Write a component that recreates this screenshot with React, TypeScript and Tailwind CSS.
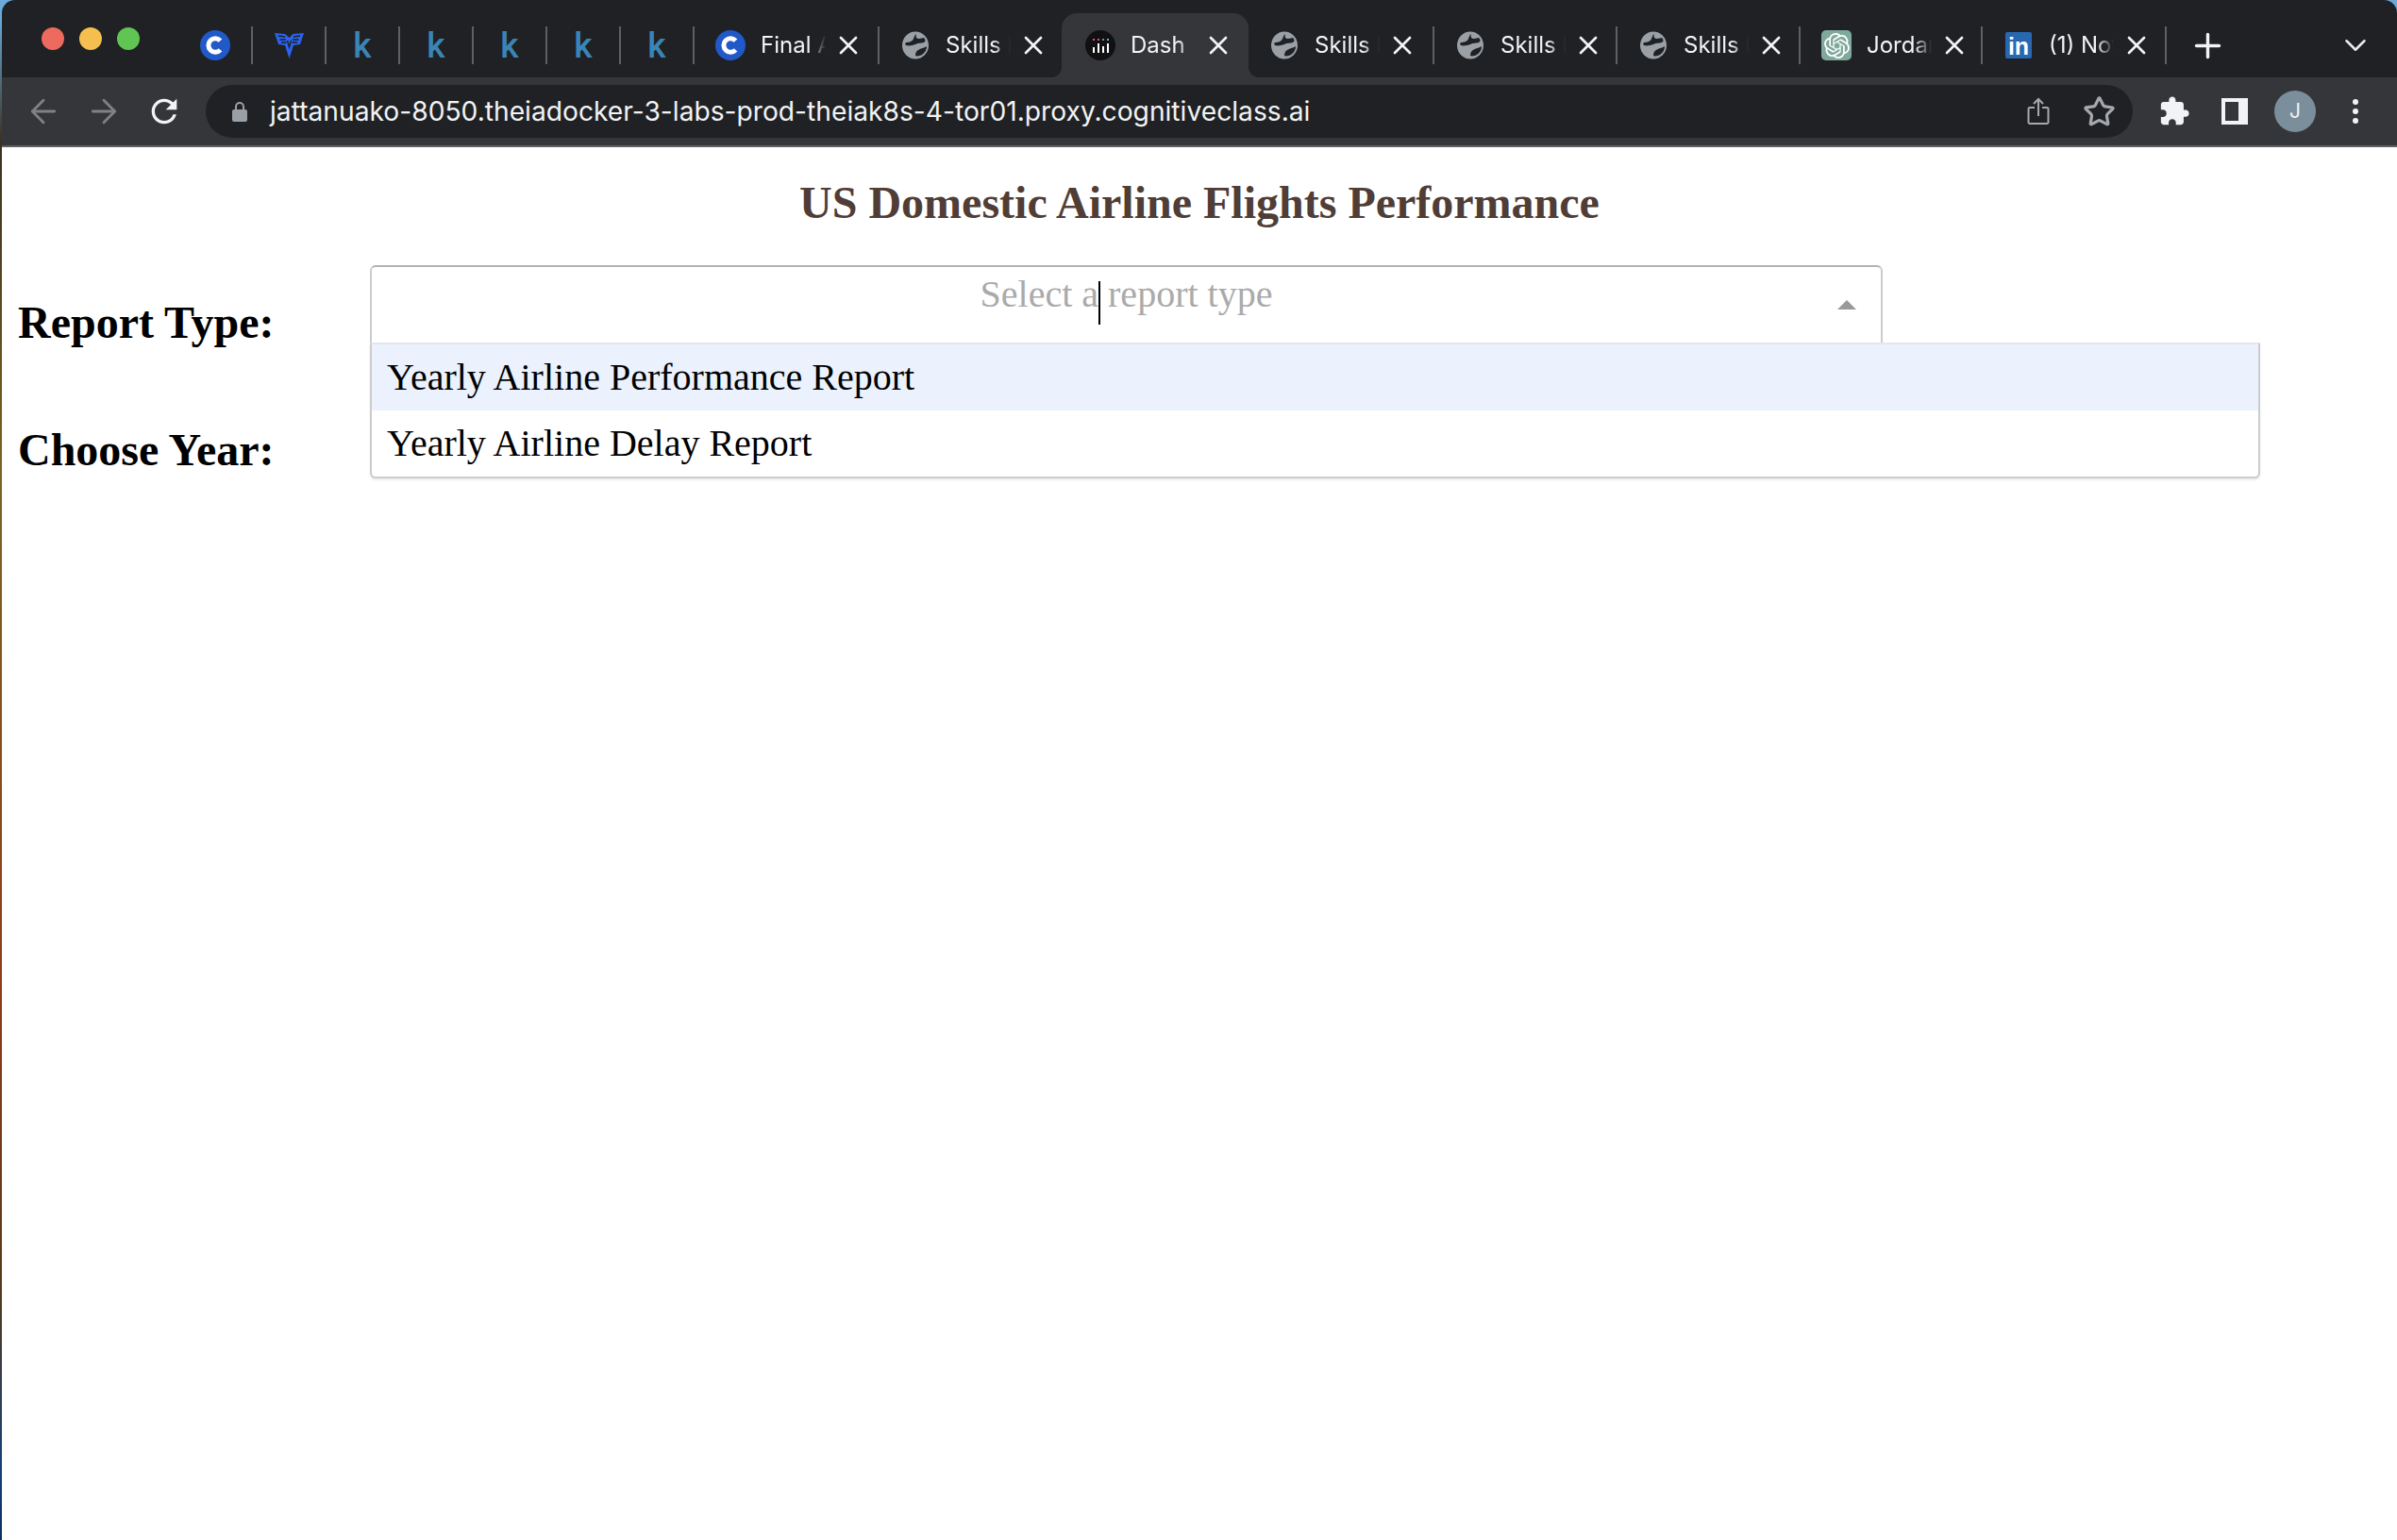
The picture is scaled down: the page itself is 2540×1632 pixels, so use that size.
import { ArrowLeft, ArrowRight, ChevronDown, Plus, Star, X } from "lucide-react";
import { SiOpenai } from "react-icons/si";

const CourseraIcon = () => (
  <svg width="32" height="32" viewBox="0 0 32 32">
    <circle cx="16" cy="16" r="16" fill="#2159c9" />
    <path d="M21.5 11.2a7.2 7.2 0 1 0 0 9.6" fill="none" stroke="#fff" strokeWidth="5" />
  </svg>
);

const ShieldIcon = () => (
  <svg width="31" height="28" viewBox="0 0 31 28">
    <path d="M0 1l11 1 4.500 4 4-4 11.500-1-4 12-7 1-4.500 14-4.500-14-7-1z" fill="#2a63ee" />
    <path
      d="M4 4l7 1M5.500 8l6.500 0M7 11l5.500 0M27 4l-7 1M25.500 8l-6.500 0M24 11l-5.500 0M13.500 9l2 7 2-7"
      fill="none"
      stroke="#202124"
      strokeWidth="1.400"
    />
  </svg>
);

const GlobeIcon = () => (
  <svg width="28" height="30" viewBox="0 0 28 30">
    <ellipse cx="14" cy="15" rx="14" ry="14.500" fill="#9aa0a6" />
    <path
      d="M15 3c-1 3 0 5 3 5 2 0 4-1 5-1 2 2 2 4 0 5-3 1-6 0-9 2-3 1-7 2-10 1-1-1-1-2 0-3 3 0 7-1 8-4 1-2 1-4 3-5z M26 16c0 4-2 7-5 9-2 1-5 2-7 1 0-3 1-5 3-6 3-2 6-2 9-4z"
      fill="#202124"
    />
  </svg>
);

const DashIcon = () => (
  <svg width="32" height="32" viewBox="0 0 32 32">
    <circle cx="16" cy="16" r="16" fill="#111114" />
    <rect x="8" y="9" width="2" height="2" fill="#e0527d" />
    <rect x="13" y="9" width="2" height="2" fill="#e0527d" />
    <rect x="18" y="9" width="2" height="2" fill="#8a7fc0" />
    <rect x="23" y="9" width="2" height="2" fill="#5bbad5" />
    <rect x="8" y="18" width="2" height="6" fill="#fff" />
    <rect x="13" y="14" width="2" height="10" fill="#fff" />
    <rect x="18" y="17" width="2" height="7" fill="#fff" />
    <rect x="23" y="14" width="2" height="10" fill="#fff" />
  </svg>
);

const OpenAiIcon = () => (
  <div className="flex h-[32px] w-[32px] items-center justify-center rounded-[5px] bg-[#7fa99b] text-white">
    <SiOpenai size={27} />
  </div>
);

const LinkedInIcon = () => (
  <div className="flex h-[28px] w-[28px] items-end justify-center rounded-[2px] bg-[#2867b2] font-['Liberation_Sans',sans-serif] text-[25px] leading-[26px] font-bold text-white">
    in
  </div>
);

const Sep = () => <div className="h-[40px] w-[2px] shrink-0 bg-[#5f6064]" />;

const PinnedTab = ({ children }: { children: React.ReactNode }) => (
  <>
    <div className="flex h-[68px] w-[76px] items-center justify-center">{children}</div>
    <Sep />
  </>
);

const KTab = () => (
  <PinnedTab>
    <span className="font-['Roboto',sans-serif] text-[37px] leading-none font-medium text-[#3a85b8]">k</span>
  </PinnedTab>
);

const Tab = ({
  icon,
  title,
  widthClass,
  active = false,
}: {
  icon: React.ReactNode;
  title: string;
  widthClass: string;
  active?: boolean;
}) => (
  <div
    className={`relative flex h-[68px] items-center ${widthClass} ${
      active ? "rounded-t-[16px] bg-[#35363a] pl-[25px]" : "pl-[22px]"
    }`}
  >
    {active && (
      <>
        <div className="absolute bottom-0 left-[-12px] h-[12px] w-[12px] bg-[radial-gradient(circle_at_0_0,transparent_12px,#35363a_12.5px)]" />
        <div className="absolute right-[-12px] bottom-0 h-[12px] w-[12px] bg-[radial-gradient(circle_at_100%_0,transparent_12px,#35363a_12.5px)]" />
      </>
    )}
    <div className="flex w-[32px] shrink-0 items-center justify-center">{icon}</div>
    <span className="ml-[16px] w-[72px] shrink-0 overflow-hidden text-[24px] whitespace-nowrap text-[#f1f3f4] [mask-image:linear-gradient(to_right,black_70%,transparent_96%)]">
      {title}
    </span>
    <div className="ml-[1px] flex w-[40px] shrink-0 items-center justify-center text-[#f1f3f4]">
      <X size={32} strokeWidth={2} />
    </div>
  </div>
);

const IconBox = ({ children }: { children: React.ReactNode }) => (
  <div className="flex h-[64px] w-[64px] shrink-0 items-center justify-center">{children}</div>
);

const App = () => {
  return (
    <div className="flex min-h-[1632px] w-[2540px] bg-[linear-gradient(to_bottom,#6aa9d8_0,#6aa9d8_20px,#3a3020_150px,#7a6420_500px,#8f3a1c_1050px,#5a3a15_1350px,#123f78_1560px,#0c2f5c_1632px)] pl-[2px] font-['Inter',sans-serif]">
      <div className="flex min-h-[1632px] w-full flex-col overflow-hidden rounded-t-[14px]">
        {/* tab strip */}
        <div className="flex h-[82px] bg-[#202124]">
          <div className="flex gap-[16px] pt-[29px] pl-[42px]">
            <div className="h-[24px] w-[24px] rounded-full bg-[#ed6a5e]" />
            <div className="h-[24px] w-[24px] rounded-full bg-[#f4bf4f]" />
            <div className="h-[24px] w-[24px] rounded-full bg-[#61c554]" />
          </div>
          <div className="mt-[14px] ml-[42px] flex h-[68px] items-center">
            <PinnedTab>
              <CourseraIcon />
            </PinnedTab>
            <PinnedTab>
              <ShieldIcon />
            </PinnedTab>
            <KTab />
            <KTab />
            <KTab />
            <KTab />
            <KTab />
            <Tab icon={<CourseraIcon />} title="Final Assignment" widthClass="w-[194px]" />
            <Sep />
            <Tab icon={<GlobeIcon />} title="Skills Network" widthClass="w-[193px]" />
            <Tab icon={<DashIcon />} title="Dash" widthClass="w-[198px]" active />
            <Tab icon={<GlobeIcon />} title="Skills Network" widthClass="w-[195px]" />
            <Sep />
            <Tab icon={<GlobeIcon />} title="Skills Network" widthClass="w-[192px]" />
            <Sep />
            <Tab icon={<GlobeIcon />} title="Skills Network" widthClass="w-[192px]" />
            <Sep />
            <Tab icon={<OpenAiIcon />} title="Jordan Tatta" widthClass="w-[191px]" />
            <Sep />
            <Tab icon={<LinkedInIcon />} title="(1) Notifications" widthClass="w-[193px]" />
            <Sep />
            <div className="ml-[11px] flex w-[64px] justify-center text-[#f1f3f4]">
              <Plus size={41} strokeWidth={2} />
            </div>
          </div>
          <div className="mt-[14px] mr-[12px] ml-auto flex h-[68px] w-[64px] items-center justify-center text-[#e8eaed]">
            <ChevronDown size={38} strokeWidth={1.6} />
          </div>
        </div>

        {/* toolbar */}
        <div className="flex h-[74px] items-start border-b-2 border-[#5f6062] bg-[#35363a] pl-[12px]">
          <div className="mt-[4px] flex">
            <IconBox>
              <ArrowLeft size={40} strokeWidth={1.7} className="text-[#7f8185]" />
            </IconBox>
            <IconBox>
              <ArrowRight size={40} strokeWidth={1.7} className="text-[#7f8185]" />
            </IconBox>
            <IconBox>
              <svg width="40" height="40" viewBox="0 0 24 24" fill="#f1f3f4">
                <path d="M17.65 6.35A7.958 7.958 0 0 0 12 4c-4.42 0-7.99 3.58-7.99 8s3.57 8 7.99 8c3.73 0 6.84-2.55 7.73-6h-2.08A5.99 5.99 0 0 1 12 18c-3.31 0-6-2.69-6-6s2.69-6 6-6c1.66 0 3.14.69 4.22 1.78L13 11h7V4l-2.35 2.35z" />
              </svg>
            </IconBox>
          </div>
          <div className="mt-[8px] ml-[12px] flex h-[56px] w-[2042px] items-center rounded-full bg-[#202124] pr-[18px] pl-[28px]">
            <svg width="16" height="22" viewBox="0 0 16 22" fill="#9aa0a6" className="shrink-0">
              <path d="M3 9V6a5 5 0 0 1 10 0v3h1a2 2 0 0 1 2 2v9a2 2 0 0 1-2 2H2a2 2 0 0 1-2-2v-9a2 2 0 0 1 2-2zm2 0h6V6a3 3 0 0 0-6 0z" />
            </svg>
            <span className="ml-[24px] text-[28.2px] whitespace-nowrap text-[#f1f3f4]">
              jattanuako-8050.theiadocker-3-labs-prod-theiak8s-4-tor01.proxy.cognitiveclass.ai
            </span>
            <svg width="24" height="30" viewBox="0 0 24 30" fill="none" stroke="#a5a9ad" strokeWidth="2" className="mr-[35px] ml-auto shrink-0">
              <path d="M8 11H3a1.500 1.500 0 0 0-1.500 1.500v14A1.500 1.500 0 0 0 3 28h18a1.500 1.500 0 0 0 1.500-1.500v-14A1.500 1.500 0 0 0 21 11h-5" />
              <path d="M12 20V2M7 7l5-5 5 5" />
            </svg>
            <Star size={35} strokeWidth={2.2} className="shrink-0 text-[#a5a9ad]" />
          </div>
          <div className="mt-[4px] ml-[12px] flex">
            <IconBox>
              <svg width="34" height="34" viewBox="0 0 24 24" fill="#f1f3f4">
                <path d="M20.500 11H19V7c0-1.100-.9-2-2-2h-4V3.500C13 2.120 11.880 1 10.500 1S8 2.120 8 3.500V5H4c-1.100 0-1.990.9-1.990 2v3.800H3.500c1.490 0 2.700 1.210 2.700 2.700s-1.210 2.700-2.700 2.700H2V20c0 1.100.9 2 2 2h3.800v-1.500c0-1.490 1.210-2.700 2.700-2.700 1.490 0 2.700 1.210 2.700 2.700V22H17c1.100 0 2-.9 2-2v-4h1.500c1.380 0 2.500-1.120 2.500-2.500S21.880 11 20.500 11z" />
              </svg>
            </IconBox>
            <IconBox>
              <div className="h-[28px] w-[28px] bg-[#f1f3f4] pt-[4px] pl-[4px]">
                <div className="h-[20px] w-[14px] bg-[#35363a]" />
              </div>
            </IconBox>
            <IconBox>
              <div className="flex h-[44px] w-[44px] items-center justify-center rounded-full bg-[#7b8e9b] text-[21px] text-[#f1f3f4]">J</div>
            </IconBox>
            <IconBox>
              <div className="flex flex-col gap-[4px]">
                <div className="h-[6px] w-[6px] rounded-full bg-[#f1f3f4]" />
                <div className="h-[6px] w-[6px] rounded-full bg-[#f1f3f4]" />
                <div className="h-[6px] w-[6px] rounded-full bg-[#f1f3f4]" />
              </div>
            </IconBox>
          </div>
        </div>

        {/* page */}
        <div className="flex-1 bg-white font-['Liberation_Serif',serif]">
          <h1 className="pt-[36px] text-center text-[48px] leading-[46px] font-bold text-[#503d36]">
            US Domestic Airline Flights Performance
          </h1>
          <div className="mt-[43px] flex">
            <div className="w-[390px] pt-[33px] pl-[17px] text-[48px] leading-[56px] font-bold text-black">Report Type:</div>
            <div className="relative h-[83px] w-[1603px] rounded-t-[6px] border-2 border-b-0 border-[#ccc] border-t-[#b3b3b3] text-center text-[40px] leading-[46px] text-[#aaa]">
              <div className="pt-[6px]">Select a report type</div>
              <div className="absolute top-[15px] left-[770px] h-[46px] w-[2px] bg-black" />
              <div className="absolute top-[35px] right-[26px] h-0 w-0 border-x-[10px] border-b-[10px] border-x-transparent border-b-[#999]" />
              <div className="absolute top-[80px] left-[-2px] w-[2003px] rounded-b-[6px] border-2 border-t-2 border-[#ccc] border-t-[#e6e6e6] bg-white text-left text-black shadow-[0_2px_2px_rgba(0,0,0,0.08)]">
                <div className="h-[70px] bg-[#ebf2fd] pt-[12px] pl-[16px]">Yearly Airline Performance Report</div>
                <div className="h-[70px] pt-[12px] pl-[16px]">Yearly Airline Delay Report</div>
              </div>
            </div>
          </div>
          <div className="mt-[79px] pl-[17px] text-[48px] leading-[56px] font-bold text-black">Choose Year:</div>
        </div>
      </div>
    </div>
  );
};

export default App;
